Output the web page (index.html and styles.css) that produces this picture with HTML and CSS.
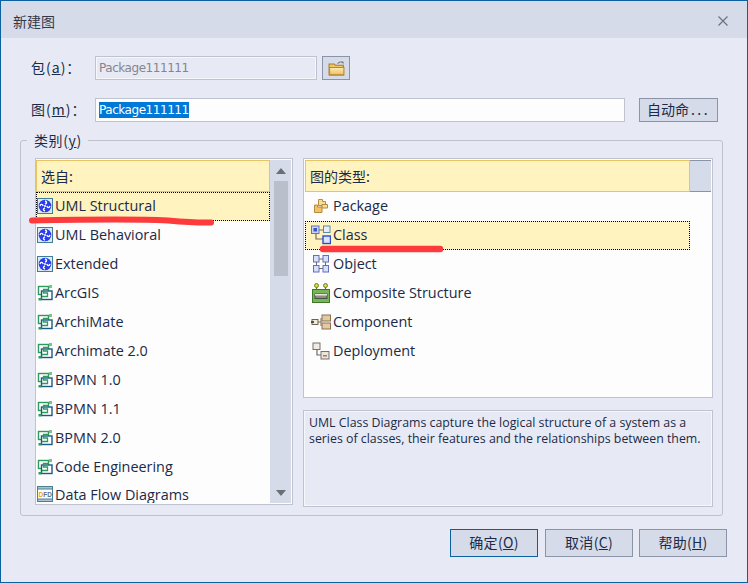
FILE: index.html
```html
<!DOCTYPE html>
<html lang="zh">
<head>
<meta charset="utf-8">
<title>新建图</title>
<link rel="stylesheet" href="styles.css">
</head>
<body>
<svg class="defs" width="0" height="0" aria-hidden="true">
  <symbol id="i-uml" viewBox="0 0 16 16">
    <rect x=".5" y=".5" width="15" height="15" fill="#dfe9f1" stroke="#3f7f96"/>
    <circle cx="8" cy="8" r="6.300" fill="#2a3cf0"/>
    <path d="M8 3c2 .6 2.200 2.400 0 3.200M13 8c-.6 2-2.400 2.200-3.200 0M8 13c-2-.6-2.200-2.400 0-3.200M3 8c.6-2 2.400-2.200 3.200 0" fill="none" stroke="#fff" stroke-width="1.400"/>
    <circle cx="8" cy="8" r="1" fill="#fff"/>
  </symbol>
  <symbol id="i-ext" viewBox="0 0 16 16">
    <rect x="1.500" y="1.500" width="10" height="8" fill="#fff" stroke="#2f9a5c" stroke-width="1.400"/>
    <rect x="4.500" y="6" width="10.500" height="8.500" fill="#fff" stroke="#1c5a86" stroke-width="1.400"/>
    <path d="M11.500 4.500H6.500V8H10.500V11.500H5" fill="none" stroke="#2f9a5c" stroke-width="1.300"/>
    <rect x="12" y="0" width="3" height="3" fill="#7cc08e"/>
    <rect x="1.500" y="13" width="3" height="2.500" fill="#2f9a5c"/>
  </symbol>
  <symbol id="i-package" viewBox="-2 -2 20 20">
    <path d="M5.500 1.500h4v2h3v4h-7z" fill="#f8dc98" stroke="#b78a3c"/>
    <path d="M1.500 7h3v2h4.500v5.500h-7.500z" fill="#f2c268" stroke="#b78a3c"/>
    <path d="M9 6.500h5.500v3.500H9z" fill="#f8dc98" stroke="#b78a3c"/>
  </symbol>
  <symbol id="i-class" viewBox="0 0 20 20">
    <path d="M8 5H12M5 9V14H13" fill="none" stroke="#7a6a58" stroke-width="1.200"/>
    <rect x=".5" y="1" width="7.500" height="7.500" fill="#c9d6f6" stroke="#6272c0"/>
    <rect x="2.500" y="3" width="3.500" height="3.500" fill="#3c52c8"/>
    <rect x="12.500" y="1" width="6.500" height="6.500" fill="#e6edf8" stroke="#5b8aa8"/>
    <rect x="12" y="11" width="7.500" height="7.500" fill="#d8e4fa" stroke="#2a4cd0" stroke-width="1.400"/>
  </symbol>
  <symbol id="i-object" viewBox="-2 -1 20 20">
    <path d="M6 4h4M6 13.500h4M3.500 7v4M12.500 7v4" stroke="#6d6d6d"/>
    <g fill="#d7e0fb" stroke="#6470b5">
      <rect x=".5" y=".5" width="5.500" height="6.500"/>
      <rect x="10" y=".5" width="5.500" height="6.500"/>
      <rect x=".5" y="10.500" width="5.500" height="6.500"/>
      <rect x="10" y="10.500" width="5.500" height="6.500"/>
    </g>
  </symbol>
  <symbol id="i-composite" viewBox="-1 0 20 20">
    <path d="M4.500 3v5M13.500 3v5" stroke="#5a7a28" stroke-width="1.200"/>
    <circle cx="4.500" cy="2.500" r="2" fill="#d5dc40" stroke="#6f8228"/>
    <circle cx="13.500" cy="2.500" r="2" fill="#d5dc40" stroke="#6f8228"/>
    <rect x=".5" y="6.500" width="17" height="13" fill="#79b554" stroke="#3d7828"/>
    <rect x="3" y="11" width="12" height="4.500" fill="#8b8e84" stroke="#4a4f48"/>
    <rect x="3" y="11" width="12" height="1.500" fill="#e4e6dc"/>
  </symbol>
  <symbol id="i-component" viewBox="0 -1 20 20">
    <path d="M7 9H10M10 5V13" stroke="#7a6a58" fill="none"/>
    <rect x="1" y="6.500" width="6" height="5" fill="#f2ead8" stroke="#6e6252"/>
    <rect x="11" y="2" width="8.500" height="6" fill="#e3c9a4" stroke="#8a7050"/>
    <rect x="11" y="10" width="8.500" height="6" fill="#e3c9a4" stroke="#8a7050"/>
    <rect x="0" y="8" width="3" height="2" fill="#55504a"/>
  </symbol>
  <symbol id="i-deploy" viewBox="-1 -1 20 20">
    <path d="M5 7V13H9" fill="none" stroke="#706a62" stroke-width="1.200"/>
    <rect x="1" y="1" width="7" height="6.500" fill="#f0ece4" stroke="#78706a"/>
    <rect x="9" y="9.500" width="8" height="7.500" fill="#e9e4dc" stroke="#78706a"/>
    <rect x="11" y="13" width="4" height="1.500" fill="#c06a6a"/>
  </symbol>
  <linearGradient id="folder-fill" x1="0" y1="0" x2="0" y2="1">
    <stop offset="0" stop-color="#fdecb8"/>
    <stop offset="1" stop-color="#f0bd5e"/>
  </linearGradient>
  <symbol id="i-folder" viewBox="0 0 16 14">
    <path d="M1 4V2.800h5L7 4h7.500v9H1z" fill="#f0c766" stroke="#a97c2c"/>
    <path d="M1.500 6h13.500v7H1.500z" fill="url(#folder-fill)" stroke="#b8892f"/>
    <path d="M9 2.500C10 .8 12.500.5 14 1.500" fill="none" stroke="#7f7f86"/>
    <path d="M12.500 0l2.500 .8-.8 2.300z" fill="#7f7f86"/>
  </symbol>
</svg>

<main class="dialog">
  <header class="titlebar">
    <span class="title-text">新建图</span>
    <span class="close">
      <svg width="10" height="10" viewBox="0 0 10 10"><path d="M.5.500L9.500 9.500M9.500.500L.5 9.500" stroke="#6f737b" stroke-width="1.200"/></svg>
    </span>
  </header>

  <div class="body">
    <div class="field-row first">
      <label class="field-label">包(<u>a</u>)：</label>
      <div class="input input-disabled">Package111111</div>
      <button class="btn btn-folder" type="button">
        <svg width="17" height="15"><use href="#i-folder"/></svg>
      </button>
    </div>
    <div class="field-row second">
      <label class="field-label">图(<u>m</u>)：</label>
      <div class="input input-grow"><span class="selected-text">Package111111</span></div>
      <button class="btn btn-auto" type="button">自动命<span class="dots">...</span></button>
    </div>

    <fieldset class="group">
      <legend class="group-legend">类别(<u>y</u>)</legend>
      <div class="panes">
        <section class="list list-left">
          <div class="list-main">
            <div class="list-head">选自:</div>
            <ul class="items">
              <li class="item selected"><svg class="ico"><use href="#i-uml"/></svg>UML Structural</li>
              <li class="item"><svg class="ico"><use href="#i-uml"/></svg>UML Behavioral</li>
              <li class="item"><svg class="ico"><use href="#i-uml"/></svg>Extended</li>
              <li class="item"><svg class="ico"><use href="#i-ext"/></svg>ArcGIS</li>
              <li class="item"><svg class="ico"><use href="#i-ext"/></svg>ArchiMate</li>
              <li class="item"><svg class="ico"><use href="#i-ext"/></svg>Archimate 2.0</li>
              <li class="item"><svg class="ico"><use href="#i-ext"/></svg>BPMN 1.0</li>
              <li class="item"><svg class="ico"><use href="#i-ext"/></svg>BPMN 1.1</li>
              <li class="item"><svg class="ico"><use href="#i-ext"/></svg>BPMN 2.0</li>
              <li class="item"><svg class="ico"><use href="#i-ext"/></svg>Code Engineering</li>
              <li class="item item-last">
                <svg class="ico" viewBox="0 0 16 16">
                  <rect x=".5" y=".5" width="15" height="15" fill="#fff" stroke="#4d7f92"/>
                  <rect x=".5" y=".5" width="15" height="2.500" fill="#a9c3d2" stroke="#4d7f92"/>
                  <rect x=".5" y="13" width="15" height="2.500" fill="#a9c3d2" stroke="#4d7f92"/>
                  <text class="dfd-text" x="1.500" y="10.800"><tspan fill="#e8a020">D</tspan><tspan fill="#5a6f8a">FD</tspan></text>
                </svg>Data Flow Diagrams
              </li>
            </ul>
          </div>
          <div class="scrollbar">
            <span class="arrow arrow-up"></span>
            <span class="thumb"></span>
            <span class="arrow arrow-down"></span>
          </div>
        </section>

        <div class="right-col">
          <section class="list list-right">
            <div class="head-row">
              <div class="list-head">图的类型:</div>
              <div class="head-end"></div>
            </div>
            <ul class="items items-right">
              <li class="item"><svg class="ico2"><use href="#i-package"/></svg>Package</li>
              <li class="item selected"><svg class="ico2"><use href="#i-class"/></svg>Class</li>
              <li class="item"><svg class="ico2"><use href="#i-object"/></svg>Object</li>
              <li class="item"><svg class="ico2"><use href="#i-composite"/></svg>Composite Structure</li>
              <li class="item"><svg class="ico2"><use href="#i-component"/></svg>Component</li>
              <li class="item"><svg class="ico2"><use href="#i-deploy"/></svg>Deployment</li>
            </ul>
          </section>
          <div class="desc">UML Class Diagrams capture the logical structure of a system as a series of classes, their features and the relationships between them.</div>
        </div>
      </div>
    </fieldset>

    <footer class="actions">
      <button class="btn btn-action btn-default" type="button">确定(<u>O</u>)</button>
      <button class="btn btn-action" type="button">取消(<u>C</u>)</button>
      <button class="btn btn-action" type="button">帮助(<u>H</u>)</button>
    </footer>
  </div>

  <svg class="scribble" width="748" height="583" viewBox="0 0 748 583" aria-hidden="true">
    <path d="M32 220.500C80 219.500 130 218.500 168 220.500C185 222 198 223 211 222.500" fill="none" stroke="#fd3a3c" stroke-width="6" stroke-linecap="round"/>
    <path d="M323 249H440" fill="none" stroke="#fd3a3c" stroke-width="6.500" stroke-linecap="round"/>
  </svg>
</main>
</body>
</html>
```

FILE: styles.css
```css
* { box-sizing: border-box; }
html, body { margin: 0; padding: 0; }
body {
  width: 748px;
  height: 583px;
  overflow: hidden;
  font-family: "Open Sans", "Noto Sans CJK SC", sans-serif;
  font-size: 14px;
  color: #1b2a48;
}
.defs { position: absolute; }
.dfd-text { font-family: "Liberation Sans", sans-serif; font-size: 6.500px; font-weight: 700; }
u { text-underline-offset: 1px; }

.dialog {
  position: relative;
  width: 748px;
  height: 583px;
  border: 1px solid #0b609f;
  background: #e7eaf4;
  display: flex;
  flex-direction: column;
}
.titlebar {
  height: 37px;
  flex: none;
  background: #d6dbe9;
  display: flex;
  align-items: center;
  justify-content: space-between;
  padding: 3px 19px 0 12px;
}
.title-text { font-family: "Noto Sans CJK SC", sans-serif; font-size: 14px; color: #33394a; }
.close { display: flex; }

.body { flex: 1; display: flex; flex-direction: column; padding: 0 0 0 19px; min-height: 0; }

.field-row { display: flex; align-items: center; height: 24px; }
.field-row.first { margin-top: 18px; }
.field-row.second { margin-top: 18px; }
.field-label {
  width: 75px;
  padding: 0 0 2px 11px;
  font-family: "Noto Sans CJK SC", sans-serif;
  font-size: 14px;
  letter-spacing: 1px;
  flex: none;
  white-space: nowrap;
}
.input {
  height: 24px;
  border: 1px solid #bfc3d0;
  background: #fdfdfd;
  padding: 0 3px;
  font-family: "DejaVu Sans", sans-serif;
  font-size: 12px;
  letter-spacing: -.45px;
  line-height: 23px;
  white-space: nowrap;
}
.input-disabled {
  width: 222px;
  background: #e7eaf4;
  box-shadow: inset 0 0 0 1px #f6f7fb;
  color: #85858f;
}
.input-grow { width: 530px; line-height: 22px; }
.selected-text { display: inline-block; background: #0078d7; color: #fff; height: 16px; line-height: 16px; }

.btn {
  font-family: "Noto Sans CJK SC", sans-serif;
  font-size: 14px;
  color: #1b2a48;
  border: 1px solid #8a93a8;
  background: #d6dbe9;
  padding: 0 0 2px;
  height: 24px;
  display: flex;
  align-items: center;
  justify-content: center;
}
.btn-folder { width: 28px; margin-left: 5px; padding: 0; }
.btn-auto { width: 79px; margin-left: 14px; }
.dots { letter-spacing: 2.500px; margin-left: 2px; }

.group {
  width: 703px;
  height: 386px;
  margin: 8px 0 0;
  padding: 0 9px 0 14px;
  border: 1px solid #bfc3d0;
  border-radius: 3px;
  flex: none;
  min-width: 0;
}
.group-legend {
  margin-left: -8px;
  padding: 0 6px 0 7px;
  font-family: "Noto Sans CJK SC", sans-serif;
  font-size: 14px;
  letter-spacing: .6px;
  line-height: 20px;
}
.panes { display: flex; gap: 10px; height: 347px; margin-top: 8px; }

.list { border: 1px solid #bfc3d0; background: #fdfdfd; }
.list-left { width: 258px; height: 347px; display: flex; padding: 1px 1px 1px 0; }
.list-main { flex: 1; min-width: 0; overflow: hidden; }
.list-head {
  height: 32px;
  background: #fff3bf;
  border: 1px solid #e8c462;
  font-family: "Noto Sans CJK SC", sans-serif;
  font-size: 14px;
  line-height: 31px;
  padding-left: 4px;
}
.items { list-style: none; margin: 0; padding: 0; }
.item {
  height: 29px;
  display: flex;
  align-items: center;
  white-space: nowrap;
  padding-bottom: 2px;
  border: 1px solid transparent;
  font-size: 14.4px;
  line-height: 17px;
}
.item.selected { background: #fff3bf; border: 1px dotted #000; }
.item.item-last { height: 22px; padding: 3px 0 0; align-items: flex-start; }
.ico { width: 16px; height: 16px; margin: 0 2px 0 0; flex: none; }

.scrollbar {
  width: 21px;
  flex: none;
  background: #d6dbe9;
  display: flex;
  flex-direction: column;
  align-items: center;
  padding: 8px 0 7px;
}
.thumb { width: 14px; height: 95px; background: #b9bfcb; margin-top: 7px; }
.arrow { width: 0; height: 0; border-left: 5.5px solid transparent; border-right: 5.5px solid transparent; }
.arrow-up { border-bottom: 6px solid #6b6e75; }
.arrow-down { border-top: 6px solid #6b6e75; margin-top: auto; }

.right-col { width: 410px; display: flex; flex-direction: column; gap: 12px; }
.list-right { height: 240px; flex: none; padding: 1px 1px 0 1px; }
.head-row { display: flex; }
.head-row .list-head { width: 385px; flex: none; }
.head-end { flex: 1; background: #d6dbe9; border-top: 1px solid #8a93a8; border-bottom: 1px solid #8a93a8; }
.items-right { width: 385px; }
.ico2 { width: 20px; height: 20px; margin: 0 2px 0 5px; flex: none; }

.desc {
  height: 97px;
  flex: none;
  border: 1px solid #bfc3d0;
  box-shadow: inset 0 0 0 1px #f6f7fb;
  padding: 4px 5px;
  font-size: 12.35px;
  line-height: 16px;
}

.actions { display: flex; margin-top: 13px; margin-left: 430px; gap: 6px; }
.btn-action { width: 88px; height: 28px; letter-spacing: .3px; }
.btn-default { border-color: #0b609f; margin-right: 1px; }

.scribble { position: absolute; left: -1px; top: -1px; pointer-events: none; }
```
